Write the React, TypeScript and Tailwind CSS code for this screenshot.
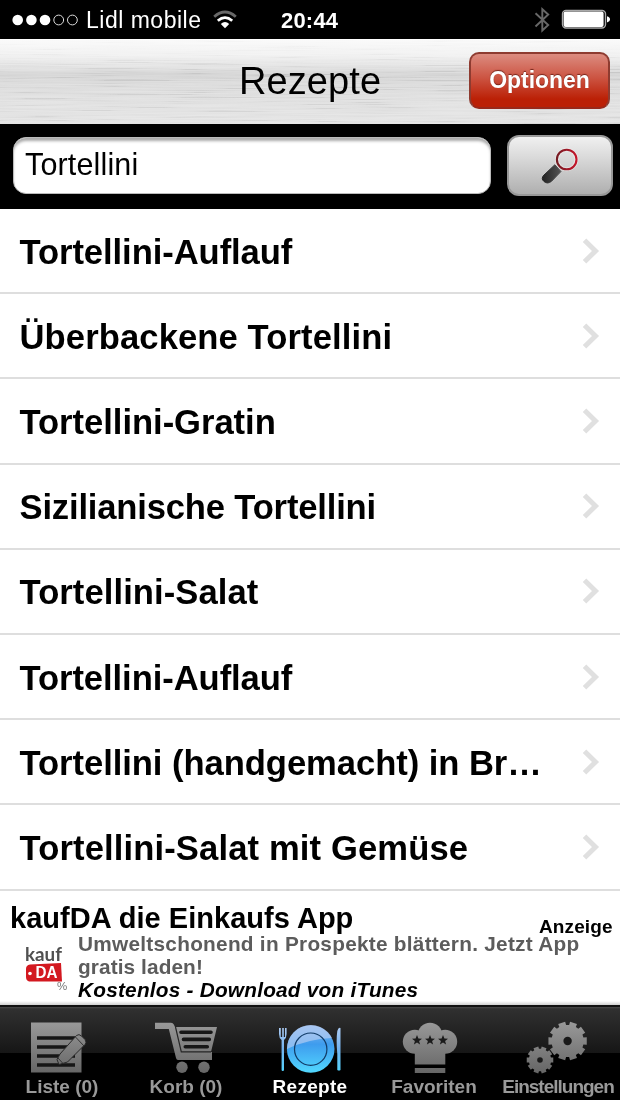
import { useState } from "react";

const recipes = [
  { name: "Tortellini-Auflauf", tracking: "tracking-[-0.07px]" },
  { name: "Überbackene Tortellini", tracking: "tracking-[0.11px]" },
  { name: "Tortellini-Gratin", tracking: "tracking-[-0.03px]" },
  { name: "Sizilianische Tortellini", tracking: "tracking-[-0.17px]" },
  { name: "Tortellini-Salat", tracking: "tracking-[0.08px]" },
  { name: "Tortellini-Auflauf", tracking: "tracking-[-0.07px]" },
  { name: "Tortellini (handgemacht) in Br…", tracking: "tracking-[-0.05px]" },
  { name: "Tortellini-Salat mit Gemüse", tracking: "tracking-[0.13px]" },
];

const STAR = "M0 -5.2 L1.4 -1.7 L5 -1.6 L2.1 0.7 L3.1 4.3 L0 2.2 L-3.1 4.3 L-2.1 0.7 L-5 -1.6 L-1.4 -1.7Z";

function StatusBar() {
  return (
    <div className="relative flex h-[39px] items-center bg-black text-white">
      <svg className="ml-3 shrink-0" width="67" height="14" viewBox="0 0 67 14">
        <g fill="#fff">
          <circle cx="5.7" cy="7" r="5.3" />
          <circle cx="19.4" cy="7" r="5.3" />
          <circle cx="33" cy="7" r="5.3" />
        </g>
        <g fill="none" stroke="#ddd" strokeWidth="1">
          <circle cx="46.7" cy="7" r="4.9" />
          <circle cx="60.4" cy="7" r="4.9" />
        </g>
      </svg>
      <span className="ml-[7px] w-[118px] pt-[1px] text-[23px] leading-[41px] tracking-[0.5px] whitespace-nowrap">Lidl mobile</span>
      <svg className="ml-[8px]" width="26" height="20" viewBox="0 0 26 20" fill="none" strokeWidth="2.8">
        <path d="M2.2 6.7Q13 -2.7 23.8 6.7" stroke="#686868" />
        <path d="M5.8 10.7Q13 4.5 20.2 10.7" stroke="#fff" />
        <path d="M8.8 14Q13 10.2 17.2 14L13 18.2Z" fill="#fff" />
      </svg>
      <span className="absolute left-[281px] pt-[1px] text-[22px] leading-[41px] font-bold tracking-[0.2px]">20:44</span>
      <svg className="absolute top-[7px] left-[534px]" width="18" height="26" viewBox="0 0 18 26" fill="none" stroke="#686868" strokeWidth="1.9">
        <path d="M1.5 6.2 14.2 18 8.3 23.5V2.2L14.2 7.5 1.5 19.5" />
      </svg>
      <svg className="absolute top-[9px] left-[561px]" width="50" height="22" viewBox="0 0 50 22">
        <rect x="1.5" y="1.5" width="43" height="17.5" rx="3.5" fill="none" stroke="#aaa" strokeWidth="1.4" />
        <rect x="2.6" y="2.6" width="40" height="15.3" rx="2" fill="#fff" />
        <path d="M46 7.2Q49 8 49 10.3T46 13.4Z" fill="#fff" />
      </svg>
    </div>
  );
}

function Header() {
  return (
    <header className="relative flex h-[85px] items-center justify-center border-t border-[#fff] bg-[linear-gradient(#f9f9f9_0%,#f0f0f0_18%,#dedede_34%,#d2d2d2_41%,#dadada_52%,#dfdfdf_75%,#e2e2e2_100%)]">
      <svg className="absolute inset-0 h-full w-full opacity-40 mix-blend-soft-light" preserveAspectRatio="none">
        <filter id="brushed" x="0" y="0" width="100%" height="100%">
          <feTurbulence type="fractalNoise" baseFrequency="0.012 0.7" numOctaves="2" seed="21" />
          <feColorMatrix values="2.2 0 0 0 -0.6  2.2 0 0 0 -0.6  2.2 0 0 0 -0.6  0 0 0 0 1" />
        </filter>
        <rect width="100%" height="100%" filter="url(#brushed)" />
      </svg>
      <h1 className="relative text-[38px] leading-[80px] tracking-[0.1px] text-black -mt-[2px]">Rezepte</h1>
      <button className="absolute top-[12px] left-[469px] h-[57px] w-[141px] rounded-[10px] border-2 border-[#8e3b30] border-b-[#98281a] bg-[linear-gradient(#dc8c80,#cc5442_45%,#bb2006_85%)] text-center text-[23px] leading-[49px] font-bold tracking-[-0.05px] text-white [text-shadow:0_-1px_1px_#74251b]">
        Optionen
      </button>
    </header>
  );
}

function SearchBar() {
  const [query, setQuery] = useState("Tortellini");

  return (
    <div className="flex h-[85px] bg-black">
      <input
        value={query}
        onChange={(e) => setQuery(e.target.value)}
        className="mt-[13px] ml-[13px] h-[57px] w-[478px] rounded-[13px] border border-[#bbb] bg-white pr-3 pb-[2px] pl-[11px] text-[30.5px] tracking-[0.15px] text-black shadow-[inset_0_4px_3px_-1px_#aaa] outline-none"
      />
      <button className="mt-[11px] ml-[16px] h-[61px] w-[106px] rounded-[12px] border-2 border-[#989898] bg-[linear-gradient(#f0f0f0,#d7d7d7_40%,#afafaf)]">
        <svg width="102" height="57" viewBox="0 0 102 57">
          <defs>
            <linearGradient id="ring" x2="1">
              <stop stopColor="#741b22" />
              <stop offset="1" stopColor="#c5162b" />
            </linearGradient>
            <linearGradient id="handle">
              <stop stopColor="#222" />
              <stop offset="1" stopColor="#555" />
            </linearGradient>
          </defs>
          <circle cx="57.7" cy="22.5" r="9.7" fill="none" stroke="#eee" strokeWidth="4" opacity=".6" />
          <path d="M45.8 27.8 52 34.5 42.5 44.3Q38.5 47.5 35 44.5T35 38Z" fill="url(#handle)" stroke="url(#handle)" strokeWidth="1" />
          <circle cx="57.7" cy="22.5" r="9.8" fill="none" stroke="url(#ring)" strokeWidth="2.1" />
        </svg>
      </button>
    </div>
  );
}

function RecipeList() {
  return (
    <ul className="bg-white">
      {recipes.map((recipe, i) => (
        <li key={i} className="flex h-[85.2px] items-center justify-between border-b-2 border-[#dedede] pr-[20px] pl-[19.5px]">
          <span className={`pt-[2px] text-[34.6px] leading-[80px] font-bold whitespace-nowrap text-black ${recipe.tracking}`}>{recipe.name}</span>
          <svg className="shrink-0" width="19" height="28" viewBox="0 0 19 28">
            <path d="M3.5 3.2 14.5 14 3.5 24.8" fill="none" stroke="#e0e0e0" strokeWidth="5" />
          </svg>
        </li>
      ))}
    </ul>
  );
}

function AdBanner() {
  return (
    <aside className="relative h-[114px] overflow-hidden bg-white">
      <h2 className="pt-[11px] pl-[10px] text-[29px] leading-[32px] font-bold tracking-[0.03px] whitespace-nowrap text-black">kaufDA die Einkaufs App</h2>
      <div className="-mt-[2px] flex">
        <svg className="mt-[12px] ml-[22px] shrink-0" width="48" height="48" viewBox="0 0 48 48">
          <text x="3" y="17" fontFamily="Lato, sans-serif" fontSize="18" fontWeight="700" fill="#505050" textLength="37" lengthAdjust="spacingAndGlyphs">kauf</text>
          <path d="M8 20.5 39 19 40 37.5 7 37.5Q4 36.5 4 33V25Q4 21 8 20.5Z" fill="#d31920" />
          <circle cx="8" cy="29.5" r="1.8" fill="#fff" />
          <text x="13.5" y="34.3" fontSize="16" fontWeight="700" fill="#fff" textLength="22" lengthAdjust="spacingAndGlyphs">DA</text>
          <text x="35" y="45.5" fontSize="11.5" fill="#777">%</text>
        </svg>
        <div className="pl-[8px] text-[20.8px] leading-[23.3px] font-bold whitespace-nowrap text-[#5c5c5c]">
          <p className="tracking-[0.26px]">Umweltschonend in Prospekte blättern. Jetzt App</p>
          <p className="tracking-[0.1px]">gratis laden!</p>
          <p className="tracking-[0.22px] text-black italic">Kostenlos - Download von iTunes</p>
        </div>
      </div>
      <span className="absolute top-[25px] left-[539px] text-[19px] leading-[22px] font-bold tracking-[0.1px] text-black">Anzeige</span>
      <div className="absolute inset-x-0 bottom-0 h-[4px] bg-linear-to-b from-white to-[#d0d0d0]" />
    </aside>
  );
}

function ListIcon() {
  return (
    <>
      <path d="M31 17.5H81.5V67.5H31Z" fill="url(#gray)" />
      <path d="M37 33H75M37 42H75M37 51H75M37 60H75" stroke="#161616" strokeWidth="3.5" />
      <path d="M57 54.5 60 49 76.5 30.5Q79 28.5 81.5 31L85 34.5Q87 37.5 85 39.5L67.5 57 59 59.5Z" fill="url(#gray)" stroke="#292929" strokeWidth="1" />
      <path d="M75.5 32 84 41M58 53 63 58.5" stroke="#333" strokeWidth="1" />
    </>
  );
}

function CartIcon() {
  return (
    <>
      <path d="M31 17.7H47Q49 17.7 49.8 19.5L51 22H93L87 47H88V55H54Q52.5 55 52 53L44.8 24H31Z" fill="url(#gray)" />
      <path d="M51.5 22 57.3 46.8H87" fill="none" stroke="#252525" strokeWidth="1.2" />
      <path d="M57 27.2H87M59.5 34.4H85.3M61.3 41.7H83.3" stroke="#171717" strokeWidth="3.6" strokeLinecap="round" />
      <circle cx="58" cy="62.3" r="5.7" fill="url(#gray)" />
      <circle cx="80" cy="62.3" r="5.7" fill="url(#gray)" />
    </>
  );
}

function PlateIcon() {
  return (
    <>
      <path d="M31 23V34Q31 38 33.6 40V70Q33.6 71 34.8 71T36 70V40Q38.6 38 38.6 34V28H37V37H35.8V28H34.2V37H32.8V28H31Z" fill="url(#cutlery)" transform="translate(0 0)" />
      <path d="M89.3 70V54Q88 40 89.3 31Q90.5 27 92.5 28V70Q91 71 89.3 70Z" fill="url(#cutlery)" />
      <circle cx="62.7" cy="44" r="23.8" fill="url(#plate)" transform="translate(0 5)" />
      <path d="M39 49A23.8 23.8 0 0 1 84 38Q60 39 39 49Z" fill="#b8cef3" opacity=".65" />
      <circle cx="62.7" cy="49.2" r="16.2" fill="none" stroke="#123c68" strokeWidth="1.2" />
    </>
  );
}

function ChefIcon() {
  return (
    <>
      <g fill="url(#gray)">
        <circle cx="42.8" cy="36.7" r="12" />
        <circle cx="73.2" cy="36.7" r="12" />
        <circle cx="58" cy="30" r="12.3" />
        <path d="M42.8 28H73.3V59.5H42.8Z" />
        <path d="M42.8 63H73.3V68H42.8Z" />
      </g>
      <g fill="#1b1b1b">
        <path d={STAR} transform="translate(45 35.3)" />
        <path d={STAR} transform="translate(58 35.3)" />
        <path d={STAR} transform="translate(71 35.3)" />
      </g>
    </>
  );
}

function Gear({ cx, cy, r, hole, teeth }: { cx: number; cy: number; r: number; hole: number; teeth: number }) {
  const pts = Array.from({ length: teeth * 4 }, (_, i) => {
    const step = (Math.PI * 2) / teeth;
    const a = Math.floor(i / 4) * step + [-0.35, -0.3, 0.3, 0.35][i % 4] * step - Math.PI / 2 + step / 2;
    const d = i % 4 === 0 || i % 4 === 3 ? r * 0.83 : r;
    return `${cx + d * Math.cos(a)},${cy + d * Math.sin(a)}`;
  }).join(" ");
  return (
    <>
      <polygon points={pts} fill="url(#gray)" />
      <circle cx={cx} cy={cy} r={hole} fill="#191919" />
    </>
  );
}

function GearsIcon() {
  return (
    <>
      <Gear cx={71.6} cy={36} r={19.5} hole={4.2} teeth={10} />
      <Gear cx={44} cy={55} r={13.5} hole={2.8} teeth={10} />
    </>
  );
}

const tabs = [
  { label: "Liste (0)", icon: <ListIcon />, tracking: "tracking-[0px]" },
  { label: "Korb (0)", icon: <CartIcon />, tracking: "tracking-[0px]" },
  { label: "Rezepte", icon: <PlateIcon />, tracking: "tracking-[0.3px]" },
  { label: "Favoriten", icon: <ChefIcon />, tracking: "tracking-[0px]" },
  { label: "Einstellungen", icon: <GearsIcon />, tracking: "tracking-[-1px]" },
];

function TabBar() {
  const [active, setActive] = useState(2);

  return (
    <nav className="grid h-[95px] grid-cols-5 bg-[linear-gradient(#111_0px,#111_2px,#4a4a4a_2px,#303030_4px,#161616_48px,#000_48px)]">
      {tabs.map((tab, i) => (
        <button key={tab.label} onClick={() => setActive(i)} className="flex flex-col items-center">
          <svg className="shrink-0 overflow-visible" width="124" height="69" viewBox={i === 2 ? "0 5 124 69" : "0 0 124 69"}>
            <defs>
              <linearGradient id="gray" x1="0" y1="17" x2="0" y2="68" gradientUnits="userSpaceOnUse">
                <stop stopColor="#999" />
                <stop offset="1" stopColor="#666" />
              </linearGradient>
              <linearGradient id="plate" x1="0" y1="0" x2="0" y2="1">
                <stop stopColor="#89b7ed" />
                <stop offset=".4" stopColor="#3e9cee" />
                <stop offset="1" stopColor="#52d8ff" />
              </linearGradient>
              <linearGradient id="cutlery" x1="0" y1="25" x2="0" y2="72" gradientUnits="userSpaceOnUse">
                <stop stopColor="#b3cef4" />
                <stop offset=".5" stopColor="#74b2ed" />
                <stop offset="1" stopColor="#51d3fc" />
              </linearGradient>
            </defs>
            {tab.icon}
          </svg>
          <span className={`pt-[1px] text-[19px] leading-[23px] font-bold whitespace-nowrap ${tab.tracking} ${active === i ? "text-white" : "text-[#999]"}`}>
            {tab.label}
          </span>
        </button>
      ))}
    </nav>
  );
}

export default function App() {
  return (
    <main className="h-[1100px] w-[620px] overflow-hidden bg-white font-['Liberation_Sans',Arial,sans-serif]">
      <StatusBar />
      <Header />
      <SearchBar />
      <RecipeList />
      <AdBanner />
      <TabBar />
    </main>
  );
}
